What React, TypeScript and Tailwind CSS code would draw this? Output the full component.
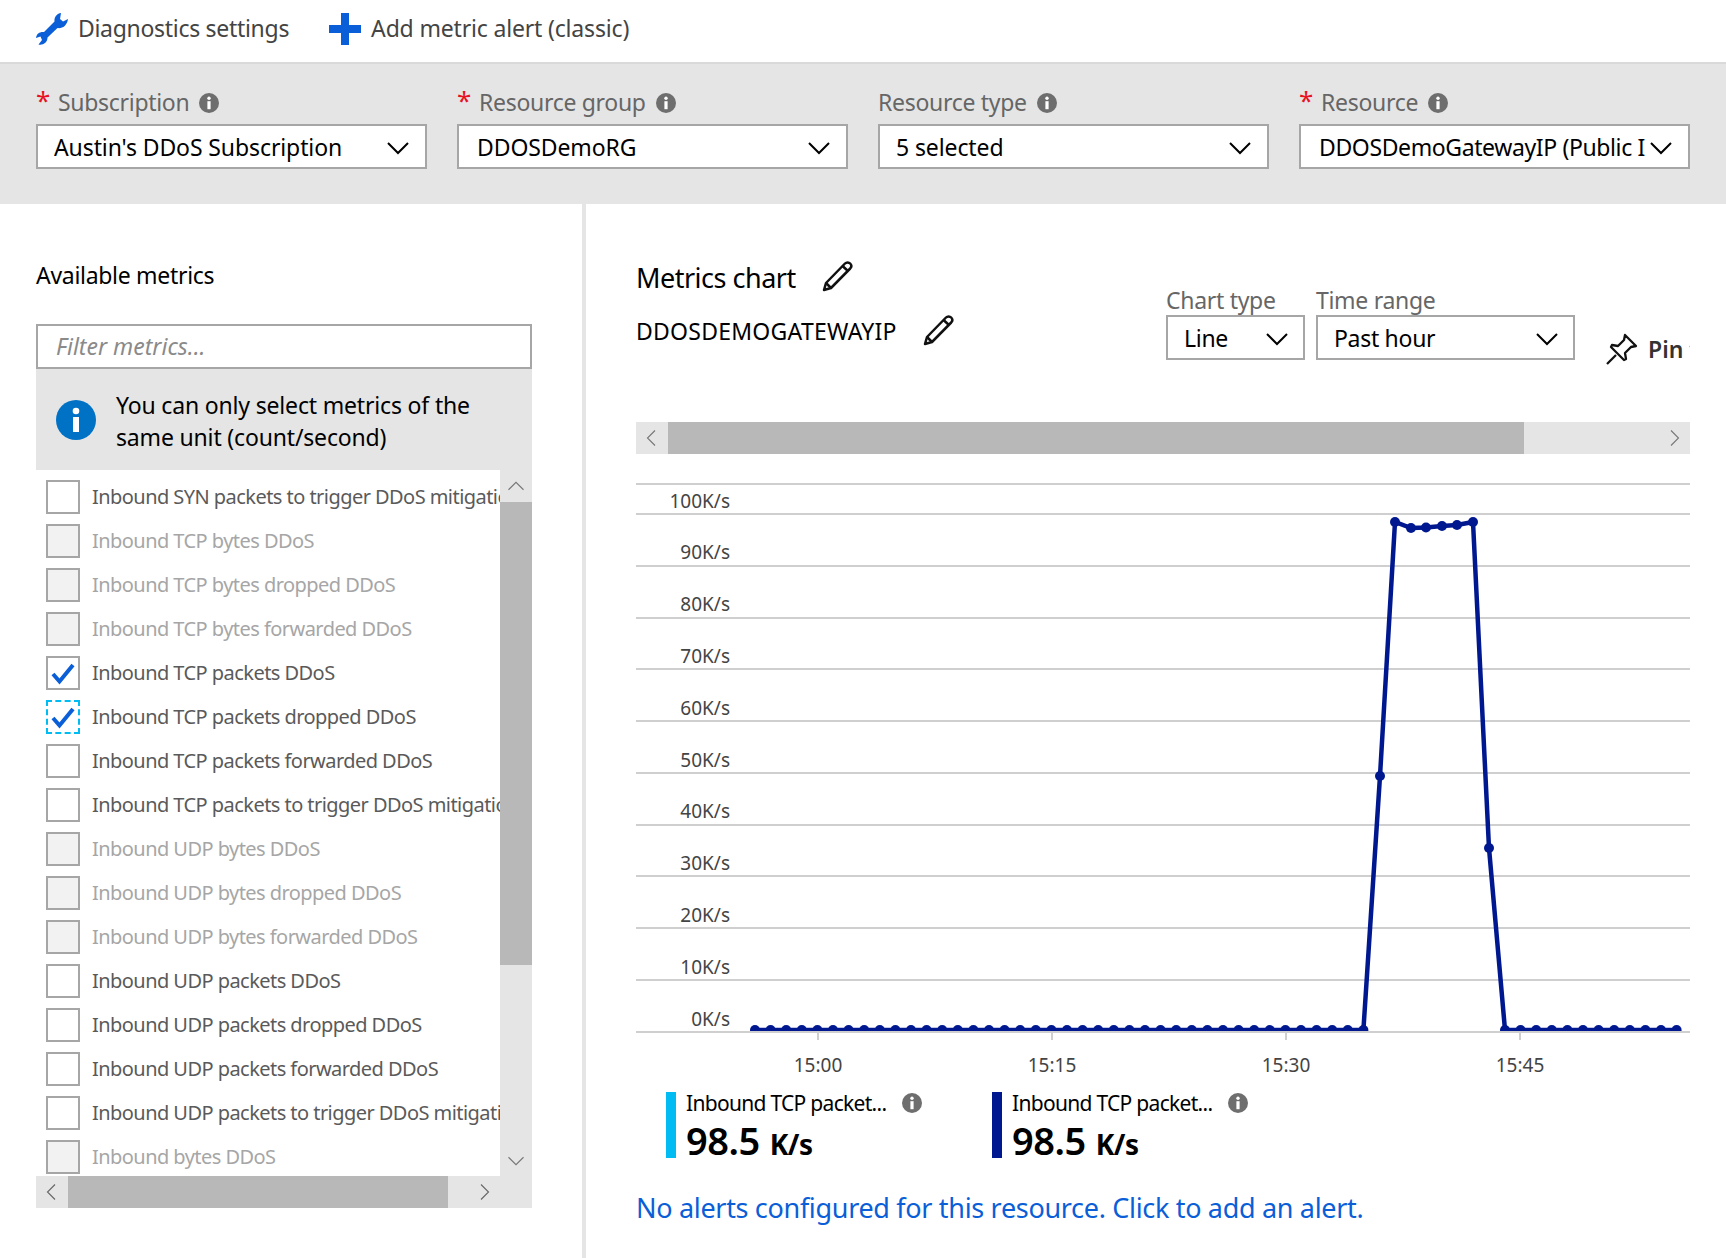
import React from 'react';

const LABEL_ROWS = [
  { text: 'Inbound SYN packets to trigger DDoS mitigation' },
  { text: 'Inbound TCP bytes DDoS', disabled: true },
  { text: 'Inbound TCP bytes dropped DDoS', disabled: true },
  { text: 'Inbound TCP bytes forwarded DDoS', disabled: true },
  { text: 'Inbound TCP packets DDoS', checked: true },
  { text: 'Inbound TCP packets dropped DDoS', checked: true, focused: true },
  { text: 'Inbound TCP packets forwarded DDoS' },
  { text: 'Inbound TCP packets to trigger DDoS mitigation' },
  { text: 'Inbound UDP bytes DDoS', disabled: true },
  { text: 'Inbound UDP bytes dropped DDoS', disabled: true },
  { text: 'Inbound UDP bytes forwarded DDoS', disabled: true },
  { text: 'Inbound UDP packets DDoS' },
  { text: 'Inbound UDP packets dropped DDoS' },
  { text: 'Inbound UDP packets forwarded DDoS' },
  { text: 'Inbound UDP packets to trigger DDoS mitigation' },
  { text: 'Inbound bytes DDoS', disabled: true },
];

const Chevron = ({ dir, className }: { dir: 'up' | 'down' | 'left' | 'right'; className?: string }) => {
  const d = {
    down: 'M2 7l10 10L22 7',
    up: 'M2 17L12 7l10 10',
    left: 'M16 2L6 12l10 10',
    right: 'M8 2l10 10L8 22',
  }[dir];
  return (
    <svg viewBox="0 0 24 24" fill="none" stroke="currentColor" className={className}>
      <path d={d} />
    </svg>
  );
};

const InfoDot = ({ className }: { className?: string }) => (
  <svg viewBox="0 0 20 20" className={className}>
    <circle cx="10" cy="10" r="10" fill="#6e6e6e" />
    <circle cx="10" cy="5.2" r="1.7" fill="#fff" />
    <rect x="8.4" y="8.2" width="3.2" height="8" fill="#fff" />
  </svg>
);

const PencilIcon = ({ className }: { className?: string }) => (
  <svg viewBox="0 0 32 32" fill="none" stroke="#111" strokeWidth="2.500" strokeLinejoin="round" className={className}>
    <path d="M9 28L2 30l2-7L23 3.500c1.500-1.500 3.800-1.500 5.200 0s1.400 3.500 0 5L9 28z" />
    <path d="M4 23l5 5M20.500 6l5.500 5" />
  </svg>
);

const Field = ({ label, value, required, wide, tight }: { label: string; value: string; required?: boolean; wide?: boolean; tight?: boolean }) => (
  <div className="w-[391px] flex flex-col">
    <div className="h-[40px] pb-[4px] flex items-center text-[23px] tracking-[-0.3px] text-[#666]">
      {required && <span className="w-[22px] text-[#e81123] text-[26px] leading-none -mt-1">*</span>}
      <span>{label}</span>
      <InfoDot className="w-[20px] h-[20px] ml-[10px] mt-[2px]" />
    </div>
    <div className={`h-[45px] pt-[2px] border-2 border-[#a6a6a6] bg-white flex items-center text-[23px] text-black ${tight ? 'tracking-[-0.38px]' : 'tracking-[-0.1px]'} ${wide ? 'pl-[18px]' : 'pl-[16px]'} pr-[15px]`}>
      <span className="flex-1 min-w-0 overflow-hidden whitespace-nowrap">{value}</span>
      <Chevron dir="down" className="w-[24px] h-[24px] shrink-0 stroke-[2]" />
    </div>
  </div>
);

const SmallSelect = ({ label, value, width }: { label: string; value: string; width: string }) => (
  <div className={`${width} flex flex-col`}>
    <div className="h-[28px] leading-[26px] text-[23px] tracking-[-0.3px] text-[#666] whitespace-nowrap">{label}</div>
    <div className="h-[45px] pt-[2px] border-2 border-[#a6a6a6] flex items-center pl-[16px] pr-[14px] text-[23px] tracking-[-0.3px] text-black">
      <span className="flex-1">{value}</span>
      <Chevron dir="down" className="w-[24px] h-[24px] stroke-[2]" />
    </div>
  </div>
);

const MetricRow = ({ text, disabled, checked, focused }: { text: string; disabled?: boolean; checked?: boolean; focused?: boolean }) => (
  <div className="h-[44px] flex items-center pl-[10px] whitespace-nowrap">
    <div
      className={`w-[34px] h-[34px] shrink-0 border-2 ${focused ? 'border-dashed border-[#00bcf2]' : 'border-[#a6a6a6]'} ${disabled ? 'bg-[#f2f2f2]' : 'bg-white'}`}
    >
      {checked && (
        <svg viewBox="0 0 30 30" fill="none" stroke="#0a5ed7" strokeWidth="4" className="w-full h-full">
          <path d="M5 16l6.500 7.500L25 7" />
        </svg>
      )}
    </div>
    <span className={`ml-[12px] text-[20px] tracking-[-0.55px] ${disabled ? 'text-[#a6a6a6]' : 'text-[#5a5a5a]'}`}>{text}</span>
  </div>
);

const GRID_Y = [484, 514, 566, 618, 669, 721, 773, 825, 876, 928, 980, 1032];
const Y_LABELS = ['100K/s', '90K/s', '80K/s', '70K/s', '60K/s', '50K/s', '40K/s', '30K/s', '20K/s', '10K/s', '0K/s'];
const TICKS = [
  { x: 818, t: '15:00' },
  { x: 1052, t: '15:15' },
  { x: 1286, t: '15:30' },
  { x: 1520, t: '15:45' },
];

// per minute samples, 14:56 to 15:55
const points: [number, number][] = [];
for (let i = 0; i < 40; i++) points.push([755 + i * 15.6, 1030]);
points.push([1380, 776], [1395, 522], [1411, 528], [1426, 527.5], [1442, 526], [1457, 525], [1473, 522], [1489, 848]);
for (let i = 0; i < 12; i++) points.push([1505 + i * 15.6, 1030]);

const MetricsChart = () => (
  <svg viewBox="636 454 1054 626" className="w-[1054px] h-[626px] block">
    {GRID_Y.map((y) => (
      <line key={y} x1="636" x2="1690" y1={y} y2={y} stroke="#cfcfcf" strokeWidth="2" />
    ))}
    {Y_LABELS.map((l, i) => (
      <text key={l} x="730" y={507.5 + i * 51.8} textAnchor="end" fontSize="19" fill="#444">
        {l}
      </text>
    ))}
    {TICKS.map((t) => (
      <g key={t.t}>
        <line x1={t.x} x2={t.x} y1="1032" y2="1040" stroke="#cfcfcf" strokeWidth="2" />
        <text x={t.x} y="1072" textAnchor="middle" fontSize="19" fill="#444">
          {t.t}
        </text>
      </g>
    ))}
    <clipPath id="plot">
      <rect x="636" y="454" width="1054" height="577" />
    </clipPath>
    <g clipPath="url(#plot)">
      <polyline points={points.map((p) => p.join(',')).join(' ')} fill="none" stroke="#00188f" strokeWidth="4.500" />
      {points.map((p, i) => (
        <circle key={i} cx={p[0]} cy={p[1]} r="5" fill="#00188f" />
      ))}
    </g>
  </svg>
);

const LegendItem = ({ color }: { color: string }) => (
  <div className="w-[326px] h-[66px] flex">
    <div className={`w-[10px] h-full ${color}`} />
    <div className="ml-[10px] flex flex-col">
      <div className="flex items-center h-[22px] text-[21px] tracking-[-0.7px] text-black whitespace-nowrap">
        <span className="w-[209px] mt-[2px]">Inbound TCP packet...</span>
        <InfoDot className="w-[20px] h-[20px] ml-[7px]" />
      </div>
      <div className="flex items-baseline mt-[7px] font-semibold text-black">
        <span className="text-[38px] leading-[38px] tracking-[-0.5px]">98.5</span>
        <span className="ml-[10px] text-[28px] leading-[38px] font-bold tracking-[-0.5px]">K/s</span>
      </div>
    </div>
  </div>
);

export default function App() {
  return (
    <div className="w-[1726px] h-[1258px] overflow-hidden bg-white flex flex-col font-['Noto_Sans','Open_Sans',sans-serif]">
      {/* toolbar */}
      <div className="h-[64px] shrink-0 border-b-2 border-[#d9d9d9] flex items-center pl-[36px] pb-[5px] text-[23px] tracking-[-0.3px] text-[#444]">
        <svg viewBox="0 0 32 32" className="w-[32px] h-[32px]" fill="#0a5ed7">
          <path d="M25 0c-4 .5-7 4-6.500 8.500L8 19c-4-.5-7.500 1.500-8 6l4.500-1.500 1.500 3.500-3.500 4.500c4.500 1 9-2 9-7L21.500 15c4.500.8 9.500-2 10.500-9l-5 2.500-3-2.500L25 0z" />
        </svg>
        <span className="ml-[10px]">Diagnostics settings</span>
        <svg viewBox="0 0 32 32" className="ml-[40px] w-[32px] h-[32px]" fill="#0a5ed7">
          <path d="M12 0h8v12h12v8H20v12h-8V20H0v-8h12z" />
        </svg>
        <span className="ml-[10px] tracking-[-0.17px]">Add metric alert (classic)</span>
      </div>

      {/* filters */}
      <div className="h-[140px] shrink-0 bg-[#e5e5e5] flex gap-[30px] pl-[36px] pt-[20px]">
        <Field label="Subscription" value="Austin's DDoS Subscription" required />
        <Field label="Resource group" value="DDOSDemoRG" required wide />
        <Field label="Resource type" value="5 selected" />
        <Field label="Resource" value="DDOSDemoGatewayIP (Public I" required wide tight />
      </div>

      <div className="flex-1 flex min-h-0">
        {/* metrics picker */}
        <div className="w-[582px] shrink-0 pl-[36px] pr-[50px] pt-[56px]">
          <div className="h-[30px] leading-[30px] text-[23px] tracking-[-0.3px] text-black">Available metrics</div>
          <div className="mt-[34px] h-[45px] border-2 border-[#a6a6a6] flex items-center pl-[18px] text-[23px] italic text-[#8a8a8a]">
            Filter metrics...
          </div>
          <div className="h-[101px] pt-[2px] bg-[#e5e5e5] flex items-center pl-[20px]">
            <svg viewBox="0 0 40 40" className="w-[40px] h-[40px] shrink-0 -mt-[2px]">
              <circle cx="20" cy="20" r="20" fill="#0072c6" />
              <circle cx="20" cy="11" r="3.300" fill="#fff" />
              <rect x="17" y="17" width="6" height="15" fill="#fff" />
            </svg>
            <div className="ml-[20px] text-[23px] leading-[32px] tracking-[-0.17px] text-black">
              You can only select metrics of the
              <br />
              same unit (count/second)
            </div>
          </div>
          <div className="flex">
            <div className="w-[464px] shrink-0">
              <div className="h-[706px] overflow-hidden pt-[5px]">
                {LABEL_ROWS.map((r) => (
                  <MetricRow key={r.text} {...r} />
                ))}
              </div>
              <div className="h-[32px] bg-[#e5e5e5] flex items-center text-[#666]">
                <div className="w-[32px] flex justify-center">
                  <Chevron dir="left" className="w-[18px] h-[18px] stroke-[1.5]" />
                </div>
                <div className="w-[380px] h-full bg-[#b8b8b8]" />
                <div className="w-[52px] flex justify-end pr-[7px]">
                  <Chevron dir="right" className="w-[18px] h-[18px] stroke-[1.5]" />
                </div>
              </div>
            </div>
            <div className="w-[32px] h-[738px] bg-[#e5e5e5] flex flex-col text-[#777]">
              <div className="h-[32px] flex items-center justify-center">
                <Chevron dir="up" className="w-[18px] h-[18px] stroke-[1.5]" />
              </div>
              <div className="h-[463px] bg-[#b8b8b8]" />
              <div className="h-[211px] flex items-end justify-center pb-[6px]">
                <Chevron dir="down" className="w-[18px] h-[18px] stroke-[1.5]" />
              </div>
            </div>
          </div>
        </div>
        <div className="w-[4px] shrink-0 bg-[#e5e5e5]" />

        {/* chart panel */}
        <div className="w-[1104px] shrink-0 pl-[50px]">
          <div className="w-[1054px] h-[218px] flex overflow-hidden">
            <div className="w-[530px] shrink-0 pt-[56px]">
              <div className="h-[36px] flex items-center text-[27px] tracking-[-0.5px] text-black">
                Metrics chart
                <PencilIcon className="w-[32px] h-[32px] ml-[26px] -mt-[4px]" />
              </div>
              <div className="mt-[17px] h-[36px] flex items-center text-[23px] tracking-[0.25px] text-black">
                DDOSDEMOGATEWAYIP
                <PencilIcon className="w-[32px] h-[32px] ml-[26px] -mt-[2px]" />
              </div>
            </div>
            <div className="pt-[83px] flex gap-[11px] shrink-0">
              <SmallSelect label="Chart type" value="Line" width="w-[139px]" />
              <SmallSelect label="Time range" value="Past hour" width="w-[259px]" />
            </div>
            <div className="pt-[128px] ml-[31px] flex items-start shrink-0 whitespace-nowrap">
              <svg viewBox="0 0 32 32" fill="none" stroke="#111" strokeWidth="2.300" strokeLinejoin="round" className="w-[32px] h-[32px] mt-[1px]">
                <path d="M19 2l11 11-5 1-6 6 1 6-2 1-13-13 1-2 6 1 6-6z" />
                <path d="M10 22L1 31" />
              </svg>
              <span className="ml-[10px] text-[23px] font-semibold text-[#333]">Pin to dashboard</span>
            </div>
          </div>

          <div className="h-[32px] bg-[#e5e5e5] flex items-center text-[#777]">
            <div className="w-[32px] flex justify-center">
              <Chevron dir="left" className="w-[18px] h-[18px] stroke-[1.5]" />
            </div>
            <div className="w-[856px] h-full bg-[#b8b8b8]" />
            <div className="flex-1 flex justify-end pr-[7px]">
              <Chevron dir="right" className="w-[18px] h-[18px] stroke-[1.5]" />
            </div>
          </div>

          <MetricsChart />

          <div className="mt-[12px] flex pl-[30px]">
            <LegendItem color="bg-[#00bcf2]" />
            <LegendItem color="bg-[#00188f]" />
          </div>
          <div className="mt-[32px] h-[36px] leading-[36px] text-[27px] tracking-[-0.32px] text-[#0a5ed7] whitespace-nowrap">
            No alerts configured for this resource. Click to add an alert.
          </div>
        </div>
      </div>
    </div>
  );
}
